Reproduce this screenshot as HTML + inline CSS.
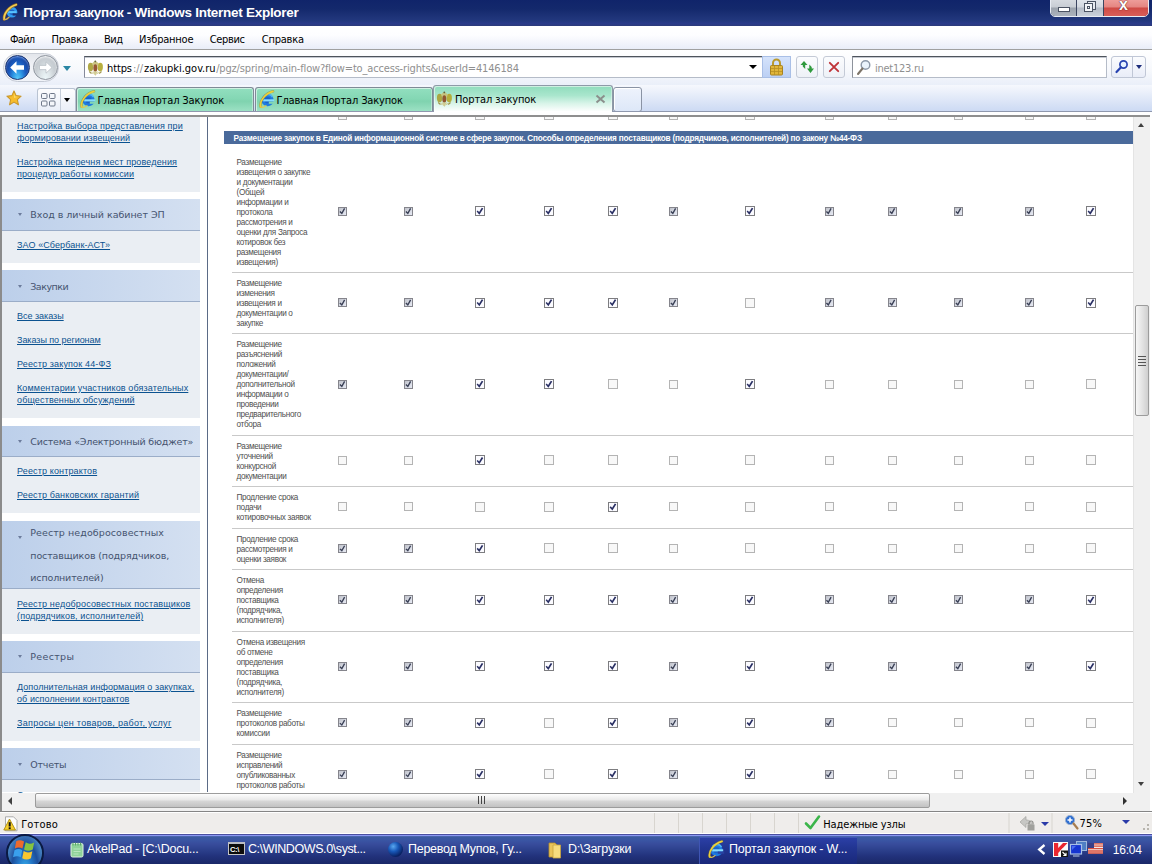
<!DOCTYPE html>
<html lang="ru"><head><meta charset="utf-8"><title>Портал закупок - Windows Internet Explorer</title>
<style>*{box-sizing:border-box;margin:0;padding:0}
html,body{width:1152px;height:864px;overflow:hidden;background:#fff;font-family:"Liberation Sans",sans-serif}
.a{position:absolute}
.t{position:absolute;white-space:nowrap;line-height:1}
#titlebar{left:0;top:0;width:1152px;height:26.3px;background:linear-gradient(#10246a 0%,#14296c 35%,#1e3378 65%,#22387e 80%,#293a8a 91%,#2c3b7a 100%)}
#menubar{left:0;top:26px;width:1152px;height:24px;background:linear-gradient(#fff 0%,#fdfdff 40%,#e9edf8 100%);border-bottom:1px solid #a0a0a0}
#navrow{left:0;top:50px;width:1152px;height:35px;background:linear-gradient(#fff,#f6f8fc 60%,#eaeff9)}
#tabrow{left:0;top:85px;width:1152px;height:27px;background:linear-gradient(#f6f8fd,#cbd9f3)}
.tab{position:absolute;top:87px;height:25px;border:1px solid #7f8a96;border-bottom:none;border-radius:3px 3px 0 0;background:linear-gradient(#92dfbf 0%,#84d7b4 45%,#7fd3af 55%,#9fe2c6 100%);box-shadow:inset 1px 1px 0 rgba(255,255,255,.55),inset -1px 0 0 rgba(255,255,255,.35)}
#content{left:0;top:115px;width:1152px;height:677px;background:#fff;overflow:hidden;border-top:2px solid #8f8f8f}
.sb{position:absolute;left:2px;width:198px;background:#eaeef3}
.sh{position:absolute;left:2px;width:198px;background:linear-gradient(90deg,#bccfea,#d4e0f1);border-bottom:1px solid #9badc8}
.sht{position:absolute;white-space:nowrap;line-height:1}
.lnk{position:absolute;white-space:nowrap;text-decoration:underline;line-height:12px}
.arr{position:absolute;width:0;height:0;border-left:2.5px solid transparent;border-right:2.5px solid transparent;border-top:3px solid #6c7c9c}
.rl{position:absolute;left:236.5px;font-size:8.2px;line-height:10.05px;color:#505050;white-space:nowrap;letter-spacing:-.32px}
.sep{position:absolute;left:232px;width:902px;height:1px;background:#c9c9c9}
.cb{position:absolute;width:9px;height:9px;border:1px solid #b4b4b4;background:#f8f8f8}
.cb.d{border-color:#85858c;background:linear-gradient(135deg,#bfc1c9,#d6d9e2 50%,#e6e9f3)}
.cb.e{border-color:#7d7d80;background:#fbfbff;width:10px;height:10px}
.cb.d:after{content:"";position:absolute;left:0;top:0;width:7px;height:7px;background:#3a4056;clip-path:polygon(0.4px 4.5px,1.4px 3.6px,2.7px 4.8px,5.0px 0.6px,6.2px 1.3px,3.0px 7px)}
.cb.e:after{content:"";position:absolute;left:0;top:0;width:8px;height:8px;background:#2a3064;clip-path:polygon(0.6px 4.6px,1.7px 3.5px,3.1px 5.0px,5.8px 0.7px,7.3px 1.5px,3.4px 7.7px)}
</style></head><body>
<div id="titlebar" class="a"></div>
<div id="menubar" class="a"></div>
<div id="navrow" class="a"></div>
<div id="tabrow" class="a"></div>
<div class="t" id="x1" style="left:23.3px;top:5.8px;font-size:13.5px;color:#fff;font-weight:bold;letter-spacing:-0.276px;">Портал закупок - Windows Internet Explorer</div>
<div class="t" id="x2" style="left:10px;top:34px;font-size:11px;color:#000;letter-spacing:-0.715px;font-family:'DejaVu Sans Condensed','Liberation Sans',sans-serif;">Файл</div>
<div class="t" id="x3" style="left:51.6px;top:34px;font-size:11px;color:#000;letter-spacing:-0.254px;font-family:'DejaVu Sans Condensed','Liberation Sans',sans-serif;">Правка</div>
<div class="t" id="x4" style="left:104px;top:34px;font-size:11px;color:#000;letter-spacing:-0.531px;font-family:'DejaVu Sans Condensed','Liberation Sans',sans-serif;">Вид</div>
<div class="t" id="x5" style="left:139px;top:34px;font-size:11px;color:#000;letter-spacing:-0.213px;font-family:'DejaVu Sans Condensed','Liberation Sans',sans-serif;">Избранное</div>
<div class="t" id="x6" style="left:209.7px;top:34px;font-size:11px;color:#000;letter-spacing:-0.340px;font-family:'DejaVu Sans Condensed','Liberation Sans',sans-serif;">Сервис</div>
<div class="t" id="x7" style="left:261.8px;top:34px;font-size:11px;color:#000;letter-spacing:-0.235px;font-family:'DejaVu Sans Condensed','Liberation Sans',sans-serif;">Справка</div>
<div id="content" class="a"></div>
<div class="a" style="left:0;top:116px;width:2px;height:676px;background:#8b8b8b"></div>
<div class="a" style="left:207px;top:117px;width:1px;height:675px;background:#5b6b86"></div>
<div class="sb" style="top:117px;height:75px"></div>
<div class="sh" style="top:199px;height:32px"></div>
<div class="sb" style="top:231px;height:32px"></div>
<div class="sh" style="top:270px;height:32px"></div>
<div class="sb" style="top:302px;height:116px"></div>
<div class="sh" style="top:426px;height:31px"></div>
<div class="sb" style="top:457px;height:56px"></div>
<div class="sh" style="top:521px;height:68px"></div>
<div class="sb" style="top:589px;height:45px"></div>
<div class="sh" style="top:641px;height:32px"></div>
<div class="sb" style="top:673px;height:68px"></div>
<div class="sh" style="top:748px;height:32px"></div>
<div class="sb" style="top:780px;height:12px"></div>
<div class="sht" id="x8" style="left:30.3px;top:210.2px;font-size:9.5px;color:#45536f;letter-spacing:-0.022px;font-family:'DejaVu Sans','Liberation Sans',sans-serif;">Вход в личный кабинет ЭП</div>
<div class="sht" id="x9" style="left:30.3px;top:282.2px;font-size:9.5px;color:#45536f;letter-spacing:-0.518px;font-family:'DejaVu Sans','Liberation Sans',sans-serif;">Закупки</div>
<div class="sht" id="x10" style="left:30.3px;top:437.2px;font-size:9.5px;color:#45536f;letter-spacing:-0.188px;font-family:'DejaVu Sans','Liberation Sans',sans-serif;">Система «Электронный бюджет»</div>
<div class="sht" id="x11" style="left:30.3px;top:528.2px;font-size:9.5px;color:#45536f;letter-spacing:0.080px;font-family:'DejaVu Sans','Liberation Sans',sans-serif;">Реестр недобросовестных</div>
<div class="sht" id="x12" style="left:30.3px;top:551.2px;font-size:9.5px;color:#45536f;letter-spacing:-0.128px;font-family:'DejaVu Sans','Liberation Sans',sans-serif;">поставщиков (подрядчиков,</div>
<div class="sht" id="x13" style="left:30.3px;top:573.2px;font-size:9.5px;color:#45536f;letter-spacing:-0.147px;font-family:'DejaVu Sans','Liberation Sans',sans-serif;">исполнителей)</div>
<div class="sht" id="x14" style="left:30.3px;top:652.2px;font-size:9.5px;color:#45536f;letter-spacing:0.314px;font-family:'DejaVu Sans','Liberation Sans',sans-serif;">Реестры</div>
<div class="sht" id="x15" style="left:30.3px;top:760.2px;font-size:9.5px;color:#45536f;letter-spacing:-0.243px;font-family:'DejaVu Sans','Liberation Sans',sans-serif;">Отчеты</div>
<div class="arr" style="left:18px;top:213px"></div>
<div class="arr" style="left:18px;top:285px"></div>
<div class="arr" style="left:18px;top:440px"></div>
<div class="arr" style="left:18px;top:536px"></div>
<div class="arr" style="left:18px;top:655px"></div>
<div class="arr" style="left:18px;top:763px"></div>
<div class="lnk" id="x16" style="left:17px;top:120px;font-size:9px;color:#0b5290;letter-spacing:0.133px;">Настройка выбора представления при</div>
<div class="lnk" id="x17" style="left:17px;top:132px;font-size:9px;color:#0b5290;letter-spacing:0.046px;">формировании извещений</div>
<div class="lnk" id="x18" style="left:17px;top:156px;font-size:9px;color:#0b5290;letter-spacing:0.148px;">Настройка перечня мест проведения</div>
<div class="lnk" id="x19" style="left:17px;top:168px;font-size:9px;color:#0b5290;letter-spacing:0.118px;">процедур работы комиссии</div>
<div class="lnk" id="x20" style="left:17px;top:239px;font-size:9px;color:#0b5290;letter-spacing:0.100px;">ЗАО «Сбербанк-АСТ»</div>
<div class="lnk" id="x21" style="left:17px;top:310px;font-size:9px;color:#0b5290;letter-spacing:-0.009px;">Все заказы</div>
<div class="lnk" id="x22" style="left:17px;top:334px;font-size:9px;color:#0b5290;letter-spacing:-0.044px;">Заказы по регионам</div>
<div class="lnk" id="x23" style="left:17px;top:358px;font-size:9px;color:#0b5290;letter-spacing:0.151px;">Реестр закупок 44-ФЗ</div>
<div class="lnk" id="x24" style="left:17px;top:382px;font-size:9px;color:#0b5290;letter-spacing:0.132px;">Комментарии участников обязательных</div>
<div class="lnk" id="x25" style="left:17px;top:394px;font-size:9px;color:#0b5290;letter-spacing:0.134px;">общественных обсуждений</div>
<div class="lnk" id="x26" style="left:17px;top:465px;font-size:9px;color:#0b5290;letter-spacing:0.141px;">Реестр контрактов</div>
<div class="lnk" id="x27" style="left:17px;top:489px;font-size:9px;color:#0b5290;letter-spacing:0.156px;">Реестр банковских гарантий</div>
<div class="lnk" id="x28" style="left:17px;top:598px;font-size:9px;color:#0b5290;letter-spacing:0.160px;">Реестр недобросовестных поставщиков</div>
<div class="lnk" id="x29" style="left:17px;top:610px;font-size:9px;color:#0b5290;letter-spacing:0.128px;">(подрядчиков, исполнителей)</div>
<div class="lnk" id="x30" style="left:17px;top:681px;font-size:9px;color:#0b5290;letter-spacing:0.077px;">Дополнительная информация о закупках,</div>
<div class="lnk" id="x31" style="left:17px;top:693px;font-size:9px;color:#0b5290;letter-spacing:0.073px;">об исполнении контрактов</div>
<div class="lnk" id="x32" style="left:17px;top:717px;font-size:9px;color:#0b5290;letter-spacing:0.291px;">Запросы цен товаров, работ, услуг</div>
<div class="lnk" id="x33" style="left:17px;top:789px;font-size:9px;color:#0b5290;letter-spacing:0.268px;">Сведения</div>
<div class="a" style="left:224px;top:131px;width:909px;height:13px;background:#4a6a9b"></div>
<div class="t" id="x34" style="left:233.5px;top:135px;font-size:8.2px;color:#fff;font-weight:bold;letter-spacing:-0.205px;">Размещение закупок в Единой информационной системе в сфере закупок. Способы определения поставщиков (подрядчиков, исполнителей) по закону №44-ФЗ</div>
<div class="cb" style="left:338.0px;top:117px;width:9px;height:3.4px;border-top:none"></div>
<div class="cb" style="left:404.0px;top:117px;width:9px;height:3.4px;border-top:none"></div>
<div class="cb" style="left:475.0px;top:117px;width:10px;height:3.4px;border-top:none"></div>
<div class="cb" style="left:544.0px;top:117px;width:10px;height:3.4px;border-top:none"></div>
<div class="cb" style="left:608.0px;top:117px;width:10px;height:3.4px;border-top:none"></div>
<div class="cb" style="left:669.0px;top:117px;width:9px;height:3.4px;border-top:none"></div>
<div class="cb" style="left:745.0px;top:117px;width:10px;height:3.4px;border-top:none"></div>
<div class="cb" style="left:824.5px;top:117px;width:9px;height:3.4px;border-top:none"></div>
<div class="cb" style="left:888.0px;top:117px;width:9px;height:3.4px;border-top:none"></div>
<div class="cb" style="left:954.0px;top:117px;width:9px;height:3.4px;border-top:none"></div>
<div class="cb" style="left:1025.0px;top:117px;width:9px;height:3.4px;border-top:none"></div>
<div class="cb" style="left:1086.0px;top:117px;width:10px;height:3.4px;border-top:none"></div>
<div class="rl" style="top:158.30px;line-height:9.93px">Размещение<br>извещения о закупке<br>и документации<br>(Общей<br>информации и<br>протокола<br>рассмотрения и<br>оценки для Запроса<br>котировок без<br>размещения<br>извещения)</div>
<div class="cb d" style="left:338.0px;top:206.5px"></div>
<div class="cb d" style="left:404.0px;top:206.5px"></div>
<div class="cb e" style="left:475.0px;top:206.0px"></div>
<div class="cb e" style="left:544.0px;top:206.0px"></div>
<div class="cb e" style="left:608.0px;top:206.0px"></div>
<div class="cb d" style="left:669.0px;top:206.5px"></div>
<div class="cb e" style="left:745.0px;top:206.0px"></div>
<div class="cb d" style="left:824.5px;top:206.5px"></div>
<div class="cb d" style="left:888.0px;top:206.5px"></div>
<div class="cb d" style="left:954.0px;top:206.5px"></div>
<div class="cb d" style="left:1025.0px;top:206.5px"></div>
<div class="cb e" style="left:1086.0px;top:206.0px"></div>
<div class="sep" style="top:272.10px"></div>
<div class="rl" style="top:279.10px">Размещение<br>изменения<br>извещения и<br>документации о<br>закупке</div>
<div class="cb d" style="left:338.0px;top:298.0px"></div>
<div class="cb d" style="left:404.0px;top:298.0px"></div>
<div class="cb e" style="left:475.0px;top:297.5px"></div>
<div class="cb e" style="left:544.0px;top:297.5px"></div>
<div class="cb e" style="left:608.0px;top:297.5px"></div>
<div class="cb d" style="left:669.0px;top:298.0px"></div>
<div class="cb" style="left:745.0px;top:297.5px;width:10px;height:10px"></div>
<div class="cb d" style="left:824.5px;top:298.0px"></div>
<div class="cb d" style="left:888.0px;top:298.0px"></div>
<div class="cb d" style="left:954.0px;top:298.0px"></div>
<div class="cb d" style="left:1025.0px;top:298.0px"></div>
<div class="cb e" style="left:1086.0px;top:297.5px"></div>
<div class="sep" style="top:333.10px"></div>
<div class="rl" style="top:340.10px">Размещение<br>разъяснений<br>положений<br>документации/<br>дополнительной<br>информации о<br>проведении<br>предварительного<br>отбора</div>
<div class="cb d" style="left:338.0px;top:379.5px"></div>
<div class="cb d" style="left:404.0px;top:379.5px"></div>
<div class="cb e" style="left:475.0px;top:379.0px"></div>
<div class="cb e" style="left:544.0px;top:379.0px"></div>
<div class="cb" style="left:608.0px;top:379.0px;width:10px;height:10px"></div>
<div class="cb" style="left:669.0px;top:379.5px"></div>
<div class="cb e" style="left:745.0px;top:379.0px"></div>
<div class="cb" style="left:824.5px;top:379.5px"></div>
<div class="cb" style="left:888.0px;top:379.5px"></div>
<div class="cb" style="left:954.0px;top:379.5px"></div>
<div class="cb" style="left:1025.0px;top:379.5px"></div>
<div class="cb" style="left:1086.0px;top:379.0px;width:10px;height:10px"></div>
<div class="sep" style="top:435.10px"></div>
<div class="rl" style="top:442.10px">Размещение<br>уточнений<br>конкурсной<br>документации</div>
<div class="cb" style="left:338.0px;top:455.9px"></div>
<div class="cb" style="left:404.0px;top:455.9px"></div>
<div class="cb e" style="left:475.0px;top:455.4px"></div>
<div class="cb" style="left:544.0px;top:455.4px;width:10px;height:10px"></div>
<div class="cb" style="left:608.0px;top:455.4px;width:10px;height:10px"></div>
<div class="cb" style="left:669.0px;top:455.9px"></div>
<div class="cb" style="left:745.0px;top:455.4px;width:10px;height:10px"></div>
<div class="cb" style="left:824.5px;top:455.9px"></div>
<div class="cb" style="left:888.0px;top:455.9px"></div>
<div class="cb" style="left:954.0px;top:455.9px"></div>
<div class="cb" style="left:1025.0px;top:455.9px"></div>
<div class="cb" style="left:1086.0px;top:455.4px;width:10px;height:10px"></div>
<div class="sep" style="top:485.90px"></div>
<div class="rl" style="top:492.90px">Продление срока<br>подачи<br>котировочных заявок</div>
<div class="cb" style="left:338.0px;top:502.3px"></div>
<div class="cb" style="left:404.0px;top:502.3px"></div>
<div class="cb" style="left:475.0px;top:501.8px;width:10px;height:10px"></div>
<div class="cb" style="left:544.0px;top:501.8px;width:10px;height:10px"></div>
<div class="cb e" style="left:608.0px;top:501.8px"></div>
<div class="cb" style="left:669.0px;top:502.3px"></div>
<div class="cb" style="left:745.0px;top:501.8px;width:10px;height:10px"></div>
<div class="cb" style="left:824.5px;top:502.3px"></div>
<div class="cb" style="left:888.0px;top:502.3px"></div>
<div class="cb" style="left:954.0px;top:502.3px"></div>
<div class="cb" style="left:1025.0px;top:502.3px"></div>
<div class="cb" style="left:1086.0px;top:501.8px;width:10px;height:10px"></div>
<div class="sep" style="top:527.90px"></div>
<div class="rl" style="top:534.90px">Продление срока<br>рассмотрения и<br>оценки заявок</div>
<div class="cb d" style="left:338.0px;top:543.8px"></div>
<div class="cb d" style="left:404.0px;top:543.8px"></div>
<div class="cb e" style="left:475.0px;top:543.3px"></div>
<div class="cb" style="left:544.0px;top:543.3px;width:10px;height:10px"></div>
<div class="cb" style="left:608.0px;top:543.3px;width:10px;height:10px"></div>
<div class="cb" style="left:669.0px;top:543.8px"></div>
<div class="cb" style="left:745.0px;top:543.3px;width:10px;height:10px"></div>
<div class="cb" style="left:824.5px;top:543.8px"></div>
<div class="cb" style="left:888.0px;top:543.8px"></div>
<div class="cb" style="left:954.0px;top:543.8px"></div>
<div class="cb" style="left:1025.0px;top:543.8px"></div>
<div class="cb" style="left:1086.0px;top:543.3px;width:10px;height:10px"></div>
<div class="sep" style="top:568.90px"></div>
<div class="rl" style="top:575.90px">Отмена<br>определения<br>поставщика<br>(подрядчика,<br>исполнителя)</div>
<div class="cb d" style="left:338.0px;top:595.2px"></div>
<div class="cb d" style="left:404.0px;top:595.2px"></div>
<div class="cb e" style="left:475.0px;top:594.7px"></div>
<div class="cb e" style="left:544.0px;top:594.7px"></div>
<div class="cb e" style="left:608.0px;top:594.7px"></div>
<div class="cb d" style="left:669.0px;top:595.2px"></div>
<div class="cb e" style="left:745.0px;top:594.7px"></div>
<div class="cb d" style="left:824.5px;top:595.2px"></div>
<div class="cb d" style="left:888.0px;top:595.2px"></div>
<div class="cb d" style="left:954.0px;top:595.2px"></div>
<div class="cb d" style="left:1025.0px;top:595.2px"></div>
<div class="cb e" style="left:1086.0px;top:594.7px"></div>
<div class="sep" style="top:630.80px"></div>
<div class="rl" style="top:637.80px">Отмена извещения<br>об отмене<br>определения<br>поставщика<br>(подрядчика,<br>исполнителя)</div>
<div class="cb d" style="left:338.0px;top:661.7px"></div>
<div class="cb d" style="left:404.0px;top:661.7px"></div>
<div class="cb e" style="left:475.0px;top:661.2px"></div>
<div class="cb e" style="left:544.0px;top:661.2px"></div>
<div class="cb e" style="left:608.0px;top:661.2px"></div>
<div class="cb d" style="left:669.0px;top:661.7px"></div>
<div class="cb e" style="left:745.0px;top:661.2px"></div>
<div class="cb d" style="left:824.5px;top:661.7px"></div>
<div class="cb d" style="left:888.0px;top:661.7px"></div>
<div class="cb d" style="left:954.0px;top:661.7px"></div>
<div class="cb d" style="left:1025.0px;top:661.7px"></div>
<div class="cb e" style="left:1086.0px;top:661.2px"></div>
<div class="sep" style="top:701.80px"></div>
<div class="rl" style="top:708.80px">Размещение<br>протоколов работы<br>комиссии</div>
<div class="cb d" style="left:338.0px;top:718.1px"></div>
<div class="cb d" style="left:404.0px;top:718.1px"></div>
<div class="cb e" style="left:475.0px;top:717.6px"></div>
<div class="cb" style="left:544.0px;top:717.6px;width:10px;height:10px"></div>
<div class="cb e" style="left:608.0px;top:717.6px"></div>
<div class="cb d" style="left:669.0px;top:718.1px"></div>
<div class="cb e" style="left:745.0px;top:717.6px"></div>
<div class="cb d" style="left:824.5px;top:718.1px"></div>
<div class="cb" style="left:888.0px;top:718.1px"></div>
<div class="cb" style="left:954.0px;top:718.1px"></div>
<div class="cb" style="left:1025.0px;top:718.1px"></div>
<div class="cb" style="left:1086.0px;top:717.6px;width:10px;height:10px"></div>
<div class="sep" style="top:743.70px"></div>
<div class="rl" style="top:750.70px">Размещение<br>исправлений<br>опубликованных<br>протоколов работы<br>комиссии</div>
<div class="cb d" style="left:338.0px;top:769.6px"></div>
<div class="cb d" style="left:404.0px;top:769.6px"></div>
<div class="cb e" style="left:475.0px;top:769.1px"></div>
<div class="cb" style="left:544.0px;top:769.1px;width:10px;height:10px"></div>
<div class="cb e" style="left:608.0px;top:769.1px"></div>
<div class="cb d" style="left:669.0px;top:769.6px"></div>
<div class="cb e" style="left:745.0px;top:769.1px"></div>
<div class="cb d" style="left:824.5px;top:769.6px"></div>
<div class="cb" style="left:888.0px;top:769.6px"></div>
<div class="cb" style="left:954.0px;top:769.6px"></div>
<div class="cb" style="left:1025.0px;top:769.6px"></div>
<div class="cb" style="left:1086.0px;top:769.1px;width:10px;height:10px"></div>
<div class="sep" style="top:804.70px"></div>
<!-- right vertical scrollbar -->
<div class="a" style="left:1133px;top:117px;width:17px;height:676px;background:#f0f0f0;border-left:1px solid #e4e4e4"></div>
<div class="a" style="left:1150px;top:112px;width:2px;height:699px;background:#fff"></div>
<div class="a" style="left:1138px;top:123px;width:0;height:0;border-left:3.500px solid transparent;border-right:3.500px solid transparent;border-bottom:4px solid #404040"></div>
<div class="a" style="left:1138px;top:782px;width:0;height:0;border-left:3.500px solid transparent;border-right:3.500px solid transparent;border-top:4px solid #404040"></div>
<div class="a" style="left:1135px;top:305px;width:14px;height:111px;border:1px solid #9c9c9c;border-radius:2px;background:linear-gradient(90deg,#f6f6f6,#e4e4e4 50%,#cfcfcf)"></div>
<div class="a" style="left:1138px;top:356px;width:8px;height:1px;background:#555;box-shadow:0 3px 0 #555,0 6px 0 #555,0 9px 0 #555"></div>
<!-- horizontal scrollbar -->
<div class="a" style="left:0;top:792.500px;width:1150px;height:18.500px;background:#f0f0f0"></div>
<div class="a" style="left:0;top:792px;width:2px;height:19px;background:#8b8b8b"></div>
<div class="a" style="left:8px;top:797px;width:0;height:0;border-top:4px solid transparent;border-bottom:4px solid transparent;border-right:4px solid #404040"></div>
<div class="a" style="left:1123px;top:796.500px;width:0;height:0;border-top:4px solid transparent;border-bottom:4px solid transparent;border-left:4.500px solid #303030"></div>
<div class="a" style="left:35px;top:793px;width:895px;height:15px;border:1px solid #9c9c9c;border-radius:2px;background:linear-gradient(#fdfdfd,#e9e9e9 45%,#d6d6d6 55%,#c2c2c2)"></div>
<div class="a" style="left:478px;top:796px;width:1px;height:8px;background:#444;box-shadow:3px 0 0 #444,6px 0 0 #444"></div>
<!-- status bar -->
<div class="a" style="left:0;top:811px;width:1152px;height:1px;background:#858585"></div>
<div class="a" style="left:0;top:812px;width:1152px;height:22px;background:#efedeb;border-top:1px solid #fff;border-bottom:1px solid #fff"></div>
<svg class="a" style="left:3px;top:816px" width="15" height="16" viewBox="0 0 15 16"><path d="M2.500 .800h8l3.500 3.500v10.500H2.500z" fill="#fdfdfd" stroke="#a4a4a4" stroke-width=".9"/><path d="M6.5 3 L12.5 14 H0.8 Z" fill="#f6cf2d" stroke="#a98a10" stroke-width=".9"/><rect x="5.700" y="6.200" width="2" height="4.300" fill="#111"/><rect x="5.700" y="11.300" width="2" height="1.800" fill="#111"/></svg>
<div class="a" style="left:654px;top:813px;width:1px;height:20px;background:#d8d5cf;box-shadow:24px 0 0 #d8d5cf,48px 0 0 #d8d5cf,72px 0 0 #d8d5cf,96px 0 0 #d8d5cf,120px 0 0 #d8d5cf,144px 0 0 #d8d5cf,354.5px 0 0 #d8d5cf,397.5px 0 0 #d8d5cf"></div>
<svg class="a" style="left:804px;top:814px" width="17" height="17" viewBox="0 0 17 17"><path d="M2 9.5 L6.5 14 L15 2.5" fill="none" stroke="#3bb54a" stroke-width="2.6" stroke-linecap="round" stroke-linejoin="round"/></svg>
<!-- security icon -->
<svg class="a" style="left:1018px;top:814px" width="19" height="18" viewBox="0 0 19 18"><path d="M2 8 L8 2.5 V6 C12 6 14 8 14 12 C12.5 10 11 9.5 8 9.8 V13.5 Z" fill="#c7c7c4" stroke="#a5a5a0" stroke-width=".7"/><rect x="9.5" y="10.5" width="7" height="6" fill="#a0a09c"/><path d="M11 10.5 V9 a2 2 0 0 1 4 0 V10.5" fill="none" stroke="#8a8a86" stroke-width="1.2"/></svg>
<div class="a" style="left:1041px;top:822px;width:0;height:0;border-left:4px solid transparent;border-right:4px solid transparent;border-top:4px solid #2a3aa8"></div>
<!-- zoom icon -->
<svg class="a" style="left:1064px;top:814px" width="16" height="17" viewBox="0 0 16 17"><circle cx="6" cy="6" r="4.6" fill="#2f6fd0" stroke="#9ab0d0" stroke-width="1"/><path d="M3.5 6h5M6 3.5v5" stroke="#fff" stroke-width="1.5"/><path d="M9.5 9.5 L13.5 14.5" stroke="#a87e50" stroke-width="2.2" stroke-linecap="round"/></svg>
<div class="a" style="left:1122px;top:820px;width:0;height:0;border-left:4px solid transparent;border-right:4px solid transparent;border-top:4px solid #2a3aa8"></div>
<div class="a" style="left:1143px;top:828px;width:2px;height:2px;background:#b8b5ae;box-shadow:4px 0 0 #b8b5ae,4px -4px 0 #b8b5ae"></div>
<!-- taskbar -->
<div class="a" style="left:0;top:834px;width:1152px;height:30px;background:linear-gradient(#4a50a0 0px,#4a50a0 1px,#8c98f4 1px,#8c98f4 2px,#3c5ca0 2.6px,#3a56a4 6px,#384c9c 10px,#2c408c 16px,#22327c 22px,#1a2868 30px)"></div>
<div class="a" style="left:699px;top:837px;width:158px;height:27px;background:linear-gradient(#2c40a8,#223592 40%,#19287a);box-shadow:inset 1px 1px 0 #3f55b4"></div>
<!-- start orb -->
<div class="a" style="left:5.500px;top:834px;width:38px;height:38px;border-radius:50%;background:radial-gradient(ellipse at 50% 100%,#39b4ee 0%,#2478c8 30%,#1d4f9c 55%,#4a86c4 80%,#86b8de 100%);border:2.500px solid #0a1a42"></div>
<svg class="a" style="left:13px;top:838.500px" width="23" height="24" viewBox="0 0 25 25">
<path d="M3.500 2 C6 0.500 9 0.500 12 2.300 L10.300 9.800 C7.500 8.300 4.800 8.300 2 9.800 Z" fill="#ee6a2c"/>
<path d="M13.800 3 C16.500 5 19.500 5 23 3.200 L21.500 10.800 C18 12.600 15 12.600 12 10.800 Z" fill="#86c440"/>
<path d="M1.600 11.600 C4.500 10 7.500 10 10 11.600 L8.400 19.200 C5.800 17.700 3 17.700 0 19.200 Z" fill="#3aa0ec"/>
<path d="M11.600 12.600 C14.500 14.600 17.500 14.600 21 12.800 L19.500 20.400 C16.200 22.300 13.200 22.300 10 20.400 Z" fill="#f9c630"/>
</svg>
<!-- taskbar icons -->
<svg class="a" style="left:69px;top:841px" width="16" height="17" viewBox="0 0 16 17"><rect x="2" y="2.5" width="12" height="13.5" rx="1.5" fill="#8fd39a" stroke="#dff3e0" stroke-width="1"/><path d="M4 1.5v3M6.5 1.500v3M9 1.500v3M11.500 1.500v3" stroke="#5aa468" stroke-width="1"/><path d="M4.500 8h7M4.500 10.500h7M4.500 13h5" stroke="#b9e6bf" stroke-width="1"/></svg>
<div class="a" style="left:228px;top:842px;width:16.500px;height:12.500px;background:#0c0c0c;border:1px solid #c4c4c4;border-top:2.500px solid #b9bcc4"></div>
<div class="t" style="left:230px;top:846px;font-size:7.500px;font-weight:bold;color:#fff;letter-spacing:-.3px">C:\</div>
<div class="a" style="left:387.500px;top:841.500px;width:15px;height:15px;border-radius:50%;background:radial-gradient(circle at 35% 30%,#5aa8f0 0%,#1858b8 35%,#0a2468 70%,#04103a 100%)"></div>
<svg class="a" style="left:547px;top:841px" width="16" height="18" viewBox="0 0 16 18"><path d="M2 2 H8 L10 4 V16 H2 Z" fill="#e9c45a" stroke="#b8912a" stroke-width=".8"/><path d="M6 4 H13.500 V17 H6 Z" fill="#f6dc7e" stroke="#c9a53c" stroke-width=".8"/></svg>
<svg class="a" style="left:708px;top:840px" width="17" height="19" viewBox="0 0 17 19">
<circle cx="8.600" cy="10.200" r="4.600" fill="#1b63c6" stroke="#1f7ae0" stroke-width="3"/>
<path d="M4.500 6.500 A5.500 5.500 0 0 1 13.500 7" fill="none" stroke="#4fb4f4" stroke-width="1.600"/>
<rect x="4.200" y="9.300" width="11" height="2.100" fill="#86dcff"/>
<rect x="9.800" y="11.500" width="6.400" height="2.300" fill="#2840a0"/>
<path d="M1.600 16.800 C0.300 11.500 6 3.200 14 1.300" fill="none" stroke="#8a7a20" stroke-width="2.600" stroke-linecap="round" opacity=".55"/>
<path d="M1.600 16.800 C0.300 11.500 6 3.200 14 1.300" fill="none" stroke="#ecd03a" stroke-width="1.700" stroke-linecap="round"/>
<path d="M1.600 16.800 C3 17.800 5.500 16.800 7 15.600" fill="none" stroke="#e6c848" stroke-width="1.200" stroke-linecap="round"/>
</svg>
<!-- tray -->
<svg class="a" style="left:1037px;top:844px" width="10" height="11" viewBox="0 0 10 11"><path d="M7.500 1 L2.200 5.500 L7.500 10" fill="none" stroke="#fff" stroke-width="2.300"/></svg>
<svg class="a" style="left:1052.500px;top:841.500px" width="15" height="15" viewBox="0 0 15 15"><rect width="15" height="15" fill="#fbfbfb"/><path d="M1 1 H5.200 V6 L10 1 H14.500 L5.200 11 V14 H1 Z" fill="#ea2630"/><path d="M7.500 8.500 L9.800 6.300 L15 11 V15 H7.500 Z" fill="#fbfbfb"/><rect x="8" y="8.500" width="7" height="6.500" fill="#151515"/><path d="M9.500 10 L13 13.500 M13 10.800 V13.500 H10.300" stroke="#fff" stroke-width="1.100" fill="none"/></svg>
<svg class="a" style="left:1069px;top:840px" width="19" height="18" viewBox="0 0 19 18"><rect x="7.500" y="1.500" width="10" height="9" fill="#4f7fc4" stroke="#9fb8dc" stroke-width="1"/><rect x="1.500" y="4.500" width="11" height="9.500" fill="#1534d0" stroke="#a9c0e6" stroke-width="1.200"/><path d="M3 6 L7 6 L3 10 Z" fill="#4a6cf0"/><rect x="4" y="15.300" width="6.500" height="1.400" fill="#8fa0c8"/></svg>
<svg class="a" style="left:1088px;top:843px" width="15" height="11" viewBox="0 0 15 11"><rect width="15" height="10.500" fill="#f3e9e6"/><path d="M0 .800 H15 M0 3.200 H15 M0 5.600 H15 M0 8 H15 M0 10 H15" stroke="#d9503f" stroke-width="1.300"/><rect width="6" height="5" fill="#3b3f86"/></svg>

<!-- title icon: IE logo -->
<svg class="a" style="left:0;top:0" width="22" height="24" viewBox="0 0 22 24">
<circle cx="12" cy="12.2" r="4.1" fill="#1d63c4" stroke="#2f9cf2" stroke-width="2.6"/>
<rect x="8" y="11.1" width="8.400" height="2.100" fill="#58c2ff"/>
<rect x="12.600" y="13.300" width="5.400" height="2.300" fill="#1b2f76"/>
<path d="M4.200 19.300 C3.400 14 9 6.600 16.200 4.700" fill="none" stroke="#9a6e1c" stroke-width="2.800" stroke-linecap="round"/>
<path d="M4.200 19.300 C3.400 14 9 6.600 16.200 4.700" fill="none" stroke="#f0cf58" stroke-width="1.700" stroke-linecap="round"/>
<path d="M4.200 19.300 C5.500 20.200 7.500 18.800 9 17.300" fill="none" stroke="#d9b050" stroke-width="1.300" stroke-linecap="round"/>
</svg>
<!-- window buttons -->
<div class="a" style="left:1050px;top:-3px;width:99px;height:20px;border:1px solid #e8ecf4;border-radius:0 0 5px 5px;overflow:hidden">
 <div class="a" style="left:0;top:0;width:26px;height:19px;background:linear-gradient(#d9dde3 0%,#c8cdd4 48%,#9ba2ac 52%,#aeb5bf 100%);border-right:1px solid #3b4560"></div>
 <div class="a" style="left:26px;top:0;width:27px;height:19px;background:linear-gradient(#e4e8ee 0%,#d2d7df 48%,#b4bbc6 52%,#cdd3dd 100%);border-right:1px solid #3b4560"></div>
 <div class="a" style="left:53px;top:0;width:46px;height:19px;background:linear-gradient(#f0a3a0 0%,#e58581 48%,#cf4a45 52%,#d9605a 100%)"></div>
</div>
<div class="a" style="left:1058px;top:7px;width:12px;height:5px;background:#fff;border:1px solid #4b5363"></div>
<div class="a" style="left:1087px;top:1px;width:9px;height:9px;border:1px solid #4b5363;background:#e8ebf0"></div>
<div class="a" style="left:1084px;top:3px;width:9px;height:9px;border:1px solid #4b5363;background:#f2f4f7"></div>
<div class="a" style="left:1087px;top:6px;width:3px;height:3px;border:1px solid #4b5363;box-sizing:content-box;width:1px;height:1px"></div>
<div class="t" style="left:1119px;top:-3px;font-size:16px;font-weight:bold;color:#fff;text-shadow:0 0 1px #5a2020,0 0 1px #5a2020">x</div>

<!-- nav buttons -->
<div class="a" style="left:3px;top:53px;width:56px;height:29px;border-radius:15px;background:linear-gradient(#d9dde4,#eef0f5 45%,#f3f5f9);border:1px solid #b4bac6;opacity:.7"></div>
<div class="a" style="left:5px;top:55px;width:25px;height:25px;border-radius:50%;background:radial-gradient(ellipse at 50% 105%,#5fd0fa 0%,#2f9ae6 28%,#1b5cc0 55%,#173f98 80%,#1a3f96 100%);border:1px solid #1c3672;box-shadow:inset 0 1px 2px rgba(150,190,255,.8)"></div>
<svg class="a" style="left:8px;top:59px" width="19" height="17" viewBox="0 0 19 17"><path d="M8.500 2.200 L2.200 8.500 L8.500 14.800 L8.500 10.700 L16 10.700 L16 6.300 L8.500 6.300 Z" fill="#fff"/></svg>
<div class="a" style="left:33px;top:55px;width:25px;height:25px;border-radius:50%;background:radial-gradient(ellipse at 50% 105%,#eef9fb 0%,#dfe7ea 30%,#c9cfd4 60%,#bcc1c8 100%);border:1px solid #8f969f;box-shadow:inset 0 1px 2px rgba(255,255,255,.9)"></div>
<svg class="a" style="left:37px;top:60px" width="17" height="15" viewBox="0 0 17 15"><path d="M9 1.800 L15 7.500 L9 13.200 L9 9.600 L2.500 9.600 L2.500 5.400 L9 5.400 Z" fill="#fff" stroke="#b3bac2" stroke-width=".7"/></svg>
<div class="a" style="left:62.500px;top:66px;width:0;height:0;border-left:4.500px solid transparent;border-right:4.500px solid transparent;border-top:5px solid #2a86a4"></div>

<!-- address box -->
<div class="a" style="left:84px;top:56px;width:704px;height:22px;background:#fff;border:1px solid #b5bcc8;border-top:1px solid #4e545c;border-left:1px solid #85899a;box-shadow:inset 0 1px 0 #c4c8d0"></div>
<!-- emblem -->
<svg class="a" style="left:87px;top:59.7px" width="17" height="17" viewBox="0 0 17 17"><g opacity=".92">
<ellipse cx="3.6" cy="7" rx="2.7" ry="4.2" fill="#aaa238"/><ellipse cx="13.2" cy="7" rx="2.7" ry="4.2" fill="#b3a92e"/>
<path d="M5 3.500 L6.500 2 L8.300 0.800 L10 2 L11.800 3.500 L11 6 L6 6 Z" fill="#c9c27a"/>
<ellipse cx="8.300" cy="8" rx="2" ry="3.800" fill="#8e4a22"/>
<path d="M4 11 L8.300 15.600 L12.800 11 L11 13.800 L8.300 14.600 L5.600 13.800 Z" fill="#b9b060"/>
<path d="M5.500 11.500 L8.300 15.500 L11.200 11.500 Z" fill="#cfc98a"/>
<circle cx="8.300" cy="1.400" r=".9" fill="#5a5a30"/>
<path d="M2.200 11.500 L4.500 13.500 M14.500 11.500 L12.200 13.500" stroke="#9a9040" stroke-width="1.200"/>
</g></svg>
<div class="a" style="left:749px;top:65px;width:0;height:0;border-left:4px solid transparent;border-right:4px solid transparent;border-top:4px solid #000"></div>
<!-- lock -->
<div class="a" style="left:762px;top:56px;width:29px;height:22px;background:linear-gradient(#d5e3fb,#bcd0f4);border:1px solid #a9bfe6"></div>
<svg class="a" style="left:769px;top:58px" width="15" height="18" viewBox="0 0 15 18">
<path d="M4 8 V5 a3.5 3.5 0 0 1 7 0 V8" fill="none" stroke="#b9992d" stroke-width="2"/>
<rect x="1.5" y="7.5" width="12" height="9.5" rx="1" fill="#e0b53a" stroke="#a9831f" stroke-width="1"/>
<path d="M2 10.5h11M2 13.5h11M5.5 8v9M9.5 8v9" stroke="#b88f22" stroke-width=".8"/>
</svg>
<!-- refresh -->
<div class="a" style="left:796px;top:56px;width:22px;height:22px;background:linear-gradient(#fbfcfe,#eef1f7);border:1px solid #c4cad6;border-radius:3px"></div>
<svg class="a" style="left:799px;top:59px" width="17" height="16" viewBox="0 0 17 16">
<path d="M5 2 L8.5 6 L6.2 6 L6.2 10 L3.8 7.5 L3.8 6 L1.5 6 Z" fill="#2f9a3d"/>
<path d="M11.5 14 L8 9.5 L10.3 9.5 L10.3 5.5 L12.7 8 L12.7 9.5 L15 9.5 Z" fill="#2f9a3d"/>
</svg>
<!-- stop -->
<div class="a" style="left:823px;top:56px;width:22px;height:22px;background:linear-gradient(#fbfcfe,#eef1f7);border:1px solid #c4cad6;border-radius:3px"></div>
<svg class="a" style="left:827px;top:60px" width="14" height="14" viewBox="0 0 14 14"><path d="M2.800 2.800 L11.200 11.200 M11.200 2.800 L2.800 11.200" stroke="#bf3338" stroke-width="1.900" stroke-linecap="round"/></svg>
<!-- search box -->
<div class="a" style="left:852px;top:56px;width:255px;height:22px;background:#fff;border:1px solid #b5bcc8;border-top:1px solid #4e545c;border-left:1px solid #8d929b;box-shadow:inset 0 1px 0 #c4c8d0"></div>
<svg class="a" style="left:856px;top:59px" width="16" height="17" viewBox="0 0 16 17"><circle cx="9.5" cy="6" r="4.3" fill="#eaf3fc" stroke="#8c98a8" stroke-width="1.4"/><path d="M6.5 9.5 L2 15" stroke="#7d7468" stroke-width="2" stroke-linecap="round"/></svg>
<!-- search button -->
<div class="a" style="left:1111px;top:56px;width:35px;height:22px;background:linear-gradient(#fbfcfe,#e9edf8);border:1px solid #c0c7d6;border-radius:3px"></div>
<div class="a" style="left:1132px;top:57px;width:1px;height:20px;background:#c0c7d6"></div>
<svg class="a" style="left:1114px;top:59px" width="16" height="16" viewBox="0 0 16 16"><circle cx="9.5" cy="5.5" r="3.6" fill="#e6f2ff" stroke="#2742b0" stroke-width="1.7"/><path d="M7 8.3 L2.5 13" stroke="#2742b0" stroke-width="2.2" stroke-linecap="round"/></svg>
<div class="a" style="left:1136px;top:65px;width:0;height:0;border-left:3px solid transparent;border-right:3px solid transparent;border-top:4px solid #1c2c7a"></div>

<!-- favourites star -->
<svg class="a" style="left:5.500px;top:90px" width="16" height="16" viewBox="0 0 18 18"><path d="M9 1 L11.400 6.300 L17 7 L12.800 10.800 L14 16.600 L9 13.600 L4 16.600 L5.200 10.800 L1 7 L6.600 6.300 Z" fill="#f7bd2e" stroke="#c9962a" stroke-width="1.200" stroke-linejoin="round"/><path d="M9 4 L10.300 7.300 L13.500 7.700 L9 9 Z" fill="#fbd968"/></svg>
<!-- quick tabs -->
<div class="a" style="left:37px;top:88px;width:39px;height:24px;border:1px solid #b9c3d2;border-bottom:none;border-radius:3px 3px 0 0;background:linear-gradient(#fdfdfe,#e9eef8)"></div>
<div class="a" style="left:60px;top:89px;width:1px;height:22px;background:#c5cdd9"></div>
<svg class="a" style="left:40px;top:92px" width="17" height="16" viewBox="0 0 17 16"><g fill="#f4f6fa" stroke="#6f7889" stroke-width="1"><rect x="1.5" y="1.5" width="5.5" height="5" rx="1"/><rect x="9.5" y="1.5" width="5.5" height="5" rx="1"/><rect x="1.5" y="9" width="5.5" height="5" rx="1"/><rect x="9.5" y="9" width="5.5" height="5" rx="1"/></g></svg>
<div class="a" style="left:64px;top:98px;width:0;height:0;border-left:3px solid transparent;border-right:3px solid transparent;border-top:4px solid #000"></div>
<!-- tabs -->
<div class="tab" style="left:76px;width:178px"></div>
<div class="tab" style="left:255px;width:178px"></div>
<div class="tab" style="left:433px;width:180px;top:85px;height:28px;background:linear-gradient(#8fdcbc 0%,#a9e6cd 35%,#d9f4e9 65%,#fff 95%);border-color:#8e9aa8"></div>
<div class="tab" style="left:613px;width:29px;top:87px;height:25px;background:linear-gradient(#eef3fc,#dde7f8);border:1px solid #8a93a4;border-radius:3px;box-shadow:inset 1px 1px 0 #fff"></div>
<svg class="a" style="left:79.5px;top:89.5px" width="17" height="19" viewBox="0 0 17 19">
<circle cx="8.600" cy="10.200" r="4.600" fill="#1b63c6" stroke="#1f7ae0" stroke-width="3"/>
<path d="M4.500 6.500 A5.500 5.500 0 0 1 13.500 7" fill="none" stroke="#4fb4f4" stroke-width="1.600"/>
<rect x="4.200" y="9.300" width="11" height="2.100" fill="#86dcff"/>
<rect x="9.800" y="11.500" width="6.400" height="2.300" fill="#84d7b4"/>
<path d="M1.600 16.800 C0.300 11.500 6 3.200 14 1.300" fill="none" stroke="#8a7a20" stroke-width="2.600" stroke-linecap="round" opacity=".55"/>
<path d="M1.600 16.800 C0.300 11.500 6 3.200 14 1.300" fill="none" stroke="#ecd03a" stroke-width="1.700" stroke-linecap="round"/>
<path d="M1.600 16.800 C3 17.800 5.500 16.800 7 15.600" fill="none" stroke="#e6c848" stroke-width="1.200" stroke-linecap="round"/>
</svg>
<svg class="a" style="left:258.5px;top:89.5px" width="17" height="19" viewBox="0 0 17 19">
<circle cx="8.600" cy="10.200" r="4.600" fill="#1b63c6" stroke="#1f7ae0" stroke-width="3"/>
<path d="M4.500 6.500 A5.500 5.500 0 0 1 13.500 7" fill="none" stroke="#4fb4f4" stroke-width="1.600"/>
<rect x="4.200" y="9.300" width="11" height="2.100" fill="#86dcff"/>
<rect x="9.800" y="11.500" width="6.400" height="2.300" fill="#84d7b4"/>
<path d="M1.600 16.800 C0.300 11.500 6 3.200 14 1.300" fill="none" stroke="#8a7a20" stroke-width="2.600" stroke-linecap="round" opacity=".55"/>
<path d="M1.600 16.800 C0.300 11.500 6 3.200 14 1.300" fill="none" stroke="#ecd03a" stroke-width="1.700" stroke-linecap="round"/>
<path d="M1.600 16.800 C3 17.800 5.500 16.800 7 15.600" fill="none" stroke="#e6c848" stroke-width="1.200" stroke-linecap="round"/>
</svg>
<svg class="a" style="left:436px;top:91px" width="17" height="17" viewBox="0 0 17 17"><g opacity=".92">
<ellipse cx="3.6" cy="7" rx="2.7" ry="4.2" fill="#aaa238"/><ellipse cx="13.2" cy="7" rx="2.7" ry="4.2" fill="#b3a92e"/>
<path d="M5 3.500 L6.500 2 L8.300 0.800 L10 2 L11.800 3.500 L11 6 L6 6 Z" fill="#c9c27a"/>
<ellipse cx="8.300" cy="8" rx="2" ry="3.800" fill="#8e4a22"/>
<path d="M4 11 L8.300 15.600 L12.800 11 L11 13.800 L8.300 14.600 L5.600 13.800 Z" fill="#b9b060"/>
<path d="M5.500 11.500 L8.300 15.500 L11.200 11.500 Z" fill="#cfc98a"/>
<circle cx="8.300" cy="1.400" r=".9" fill="#5a5a30"/>
<path d="M2.200 11.500 L4.500 13.500 M14.500 11.500 L12.200 13.500" stroke="#9a9040" stroke-width="1.200"/>
</g></svg>
<svg class="a" style="left:595px;top:94px" width="11" height="10" viewBox="0 0 11 10"><path d="M1.5 1.5 L9.5 8.5 M9.5 1.5 L1.5 8.5" stroke="#8b8f8c" stroke-width="2"/></svg>
<div class="a" style="left:0;top:111px;width:1152px;height:1px;background:#8f98ae"></div>
<div class="a" style="left:0;top:112px;width:1152px;height:3px;background:#fff"></div>
<div class="a" style="left:434px;top:111px;width:178px;height:1px;background:#fff"></div>

<div class="t" id="x35" style="left:107.1px;top:63.2px;font-size:11px;color:#000;letter-spacing:-0.146px;font-family:'DejaVu Sans Condensed','Liberation Sans',sans-serif;">https</div>
<div class="t" id="x36" style="left:133px;top:63.2px;font-size:11px;color:#8f8f8f;letter-spacing:-0.008px;font-family:'DejaVu Sans Condensed','Liberation Sans',sans-serif;">://</div>
<div class="t" id="x37" style="left:144px;top:63.2px;font-size:11px;color:#000;letter-spacing:-0.004px;font-family:'DejaVu Sans Condensed','Liberation Sans',sans-serif;">zakupki.gov.ru</div>
<div class="t" id="x38" style="left:216.2px;top:63.2px;font-size:11px;color:#8f8f8f;letter-spacing:-0.166px;font-family:'DejaVu Sans Condensed','Liberation Sans',sans-serif;">/pgz/spring/main-flow?flow=to_access-rights&amp;userId=4146184</div>
<div class="t" id="x39" style="left:875px;top:62.8px;font-size:11px;color:#8f8f8f;letter-spacing:-0.262px;font-family:'DejaVu Sans Condensed','Liberation Sans',sans-serif;">inet123.ru</div>
<div class="t" id="x40" style="left:97.5px;top:95px;font-size:11px;color:#000;letter-spacing:-0.144px;font-family:'DejaVu Sans Condensed','Liberation Sans',sans-serif;">Главная Портал Закупок</div>
<div class="t" id="x41" style="left:276.5px;top:95px;font-size:11px;color:#000;letter-spacing:-0.153px;font-family:'DejaVu Sans Condensed','Liberation Sans',sans-serif;">Главная Портал Закупок</div>
<div class="t" id="x42" style="left:455px;top:94px;font-size:11px;color:#000;letter-spacing:-0.112px;font-family:'DejaVu Sans Condensed','Liberation Sans',sans-serif;">Портал закупок</div>
<div class="t" id="x43" style="left:21.2px;top:819px;font-size:11px;color:#000;letter-spacing:0.141px;font-family:'DejaVu Sans Condensed','Liberation Sans',sans-serif;">Готово</div>
<div class="t" id="x44" style="left:823.3px;top:819px;font-size:11px;color:#000;letter-spacing:-0.153px;font-family:'DejaVu Sans Condensed','Liberation Sans',sans-serif;">Надежные узлы</div>
<div class="t" id="x45" style="left:1079.5px;top:818px;font-size:11px;color:#000;letter-spacing:0.250px;font-family:'DejaVu Sans Condensed','Liberation Sans',sans-serif;">75%</div>
<div class="t" id="x46" style="left:87px;top:843px;font-size:12.5px;color:#fff;letter-spacing:-0.246px;">AkelPad - [C:\Docu...</div>
<div class="t" id="x47" style="left:248px;top:843px;font-size:12.5px;color:#fff;letter-spacing:-0.405px;">C:\WINDOWS.0\syst...</div>
<div class="t" id="x48" style="left:408px;top:843px;font-size:12.5px;color:#fff;letter-spacing:-0.276px;">Перевод Мупов, Гу...</div>
<div class="t" id="x49" style="left:568px;top:843px;font-size:12.5px;color:#fff;letter-spacing:-0.278px;">D:\Загрузки</div>
<div class="t" id="x50" style="left:729px;top:843px;font-size:12.5px;color:#fff;letter-spacing:-0.190px;">Портал закупок - W...</div>
<div class="t" id="x51" style="left:1112.8px;top:843.6px;font-size:12px;color:#fff;letter-spacing:-0.208px;">16:04</div>
</body></html>
